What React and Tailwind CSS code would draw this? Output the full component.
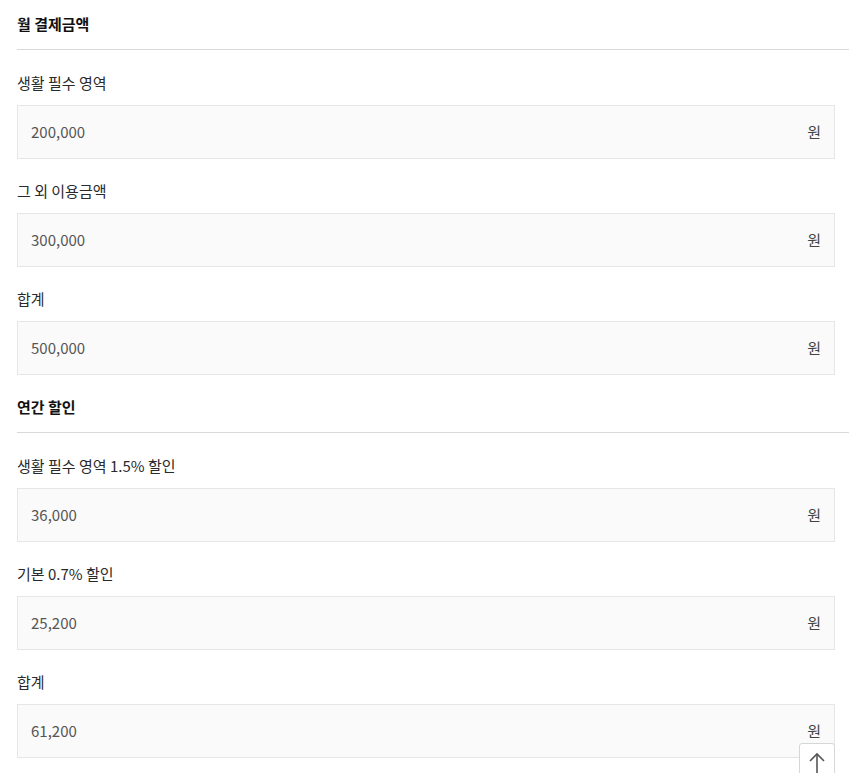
import React from "react";

const Field = ({ label, value }) => (
  <div className="flex flex-col">
    <div className="h-[22px] flex items-center text-[15px] leading-[22px] text-[#2a2a2a]">{label}</div>
    <div className="mt-[11px] w-[818px] h-[54px] border border-[#e6e6e6] bg-[#fafafa] flex items-center justify-between pl-[13px] pr-[13px] text-[15px] text-[#555]">
      <span>{value}</span>
      <span className="text-[#444]">원</span>
    </div>
  </div>
);

const Section = ({ title, items, first }) => (
  <div className={first ? "" : "mt-[21px]"}>
    <div className="pl-[17px] h-[22px] flex items-center text-[15px] font-bold text-[#111]">{title}</div>
    <div className="ml-[17px] mt-[14px] h-px bg-[#d9d9d9]" />
    <div className="pl-[17px] flex flex-col gap-[21px] mt-[22px]">
      {items.map((it, i) => (
        <Field key={i} label={it[0]} value={it[1]} />
      ))}
    </div>
  </div>
);

export default function App() {
  return (
    <div
      className="relative w-[849px] h-[773px] overflow-hidden bg-white pt-[13px]"
      style={{ fontFamily: '"Noto Sans CJK KR", "Noto Sans", sans-serif' }}
    >
      <Section
        first
        title="월 결제금액"
        items={[
          ["생활 필수 영역", "200,000"],
          ["그 외 이용금액", "300,000"],
          ["합계", "500,000"],
        ]}
      />
      <Section
        title="연간 할인"
        items={[
          ["생활 필수 영역 1.5% 할인", "36,000"],
          ["기본 0.7% 할인", "25,200"],
          ["합계", "61,200"],
        ]}
      />
      <button className="absolute left-[799px] top-[743px] w-[36px] h-[40px] bg-white border border-[#d6d6d6] rounded-t-[3px] flex justify-center pt-[8px]">
        <svg width="18" height="22" viewBox="0 0 18 22" fill="none" stroke="#555" strokeWidth="1.6">
          <path d="M9 2 V22" />
          <path d="M2 9 L9 2 L16 9" />
        </svg>
      </button>
    </div>
  );
}
